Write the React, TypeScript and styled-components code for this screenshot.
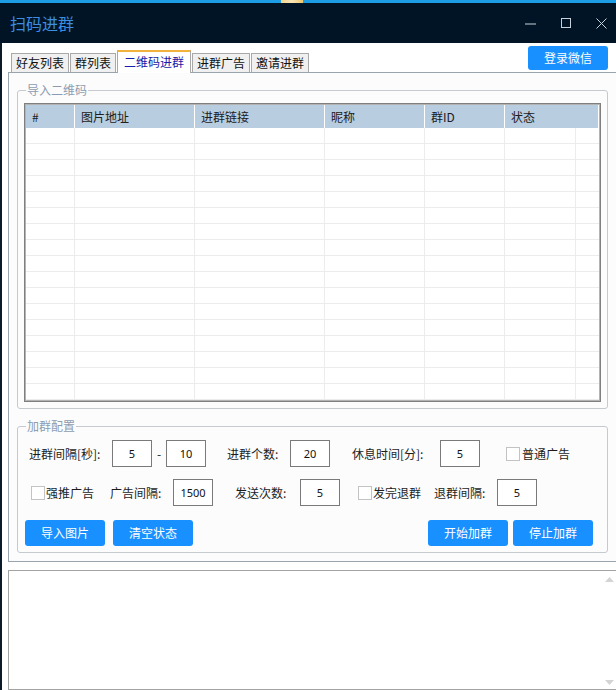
import styled, { createGlobalStyle } from "styled-components";

const GlobalStyle = createGlobalStyle`
  html, body {
    margin: 0;
    padding: 0;
    background: #ffffff;
  }
  body {
    font-family: "Noto Sans CJK SC", "Noto Sans", sans-serif;
    font-size: 12px;
    color: #1c1c1c;
  }
  * {
    box-sizing: border-box;
  }
`;

const Window = styled.div`
  width: 616px;
  height: 690px;
  overflow: hidden;
  display: flex;
  flex-direction: column;
  background: #ffffff;
`;

const TopStrip = styled.div`
  height: 3px;
  flex-shrink: 0;
  background: #1c9de6;
  display: flex;
  & > span {
    margin-left: 281px;
    width: 22px;
    background: linear-gradient(90deg, #f3d48a, #f8e6b8, #f0c76a);
  }
`;

const TitleBar = styled.div`
  height: 40px;
  flex-shrink: 0;
  background: #011426;
  display: flex;
  align-items: center;
  padding-left: 10px;
`;

const Title = styled.div`
  font-size: 16px;
  line-height: 20px;
  color: #3a8fe2;
`;

const Controls = styled.div`
  margin-left: auto;
  display: flex;
  align-items: center;
  gap: 25px;
  padding-right: 9px;
  color: #c9d2db;
  & svg {
    display: block;
  }
`;

const Body = styled.div`
  flex: 1;
  display: flex;
  flex-direction: column;
  border-left: 2px solid #0a1a29;
  padding-left: 6px;
  overflow: hidden;
`;

const TabRow = styled.div`
  height: 29px;
  flex-shrink: 0;
  display: flex;
  align-items: flex-end;
  padding-left: 3px;
`;

const Tab = styled.div<{ $active?: boolean }>`
  position: relative;
  z-index: ${(p) => (p.$active ? 1 : 0)};
  height: ${(p) => (p.$active ? "23px" : "19px")};
  margin-bottom: ${(p) => (p.$active ? "-1px" : "0")};
  margin-right: 1px;
  padding: 0 ${(p) => (p.$active ? "6px" : "4px")};
  border: 1px solid #a9a9a9;
  border-top: ${(p) => (p.$active ? "2px solid #f2b23e" : "1px solid #a9a9a9")};
  border-bottom: none;
  background: ${(p) => (p.$active ? "#ffffff" : "#f0f0f0")};
  color: ${(p) => (p.$active ? "#1620a8" : "#111111")};
  font-size: 12px;
  line-height: ${(p) => (p.$active ? "20px" : "18px")};
  white-space: nowrap;
`;

const BlueButton = styled.button<{ $ml?: number }>`
  width: 80px;
  height: 26px;
  margin-left: ${(p) => p.$ml ?? 0}px;
  border: none;
  border-radius: 3px;
  background: #1890ff;
  color: #ffffff;
  font-family: "Noto Sans CJK SC", "Noto Sans", sans-serif;
  font-size: 12px;
  line-height: 26px;
  padding: 0;
  cursor: pointer;
`;

const LoginButton = styled(BlueButton)`
  height: 24px;
  line-height: 24px;
  margin-left: auto;
  margin-right: 8px;
  align-self: flex-start;
  margin-top: 3px;
`;

const Panel = styled.div`
  width: 610px;
  flex-shrink: 0;
  border: 1px solid #9aa4ad;
  background: #fcfcfd;
  padding: 10px 9px 8px 8px;
  display: flex;
  flex-direction: column;
`;

const Group = styled.fieldset<{ $mt?: number }>`
  margin: ${(p) => p.$mt ?? 0}px 0 0 0;
  padding: 6px 6px 6px 6px;
  border: 1px solid #c6cace;
  border-radius: 3px;
  min-width: 0;
`;

const Legend = styled.legend`
  margin-left: 2px;
  padding: 0 1px;
  font-size: 12px;
  line-height: 14px;
  color: #8d9cb0;
`;

const Table = styled.div`
  border: 1px solid #7f7f7f;
  padding: 1px;
  background: #b3b3b3;
`;

const Grid = styled.div`
  display: grid;
  grid-template-columns: 49px 120px 130px 100px 80px 71px 1fr;
  background: #ffffff;
`;

const HeadCell = styled.div<{ $span?: number }>`
  grid-column: span ${(p) => p.$span ?? 1};
  height: 23px;
  line-height: 23px;
  padding-left: 6px;
  background: #b9cde1;
  border-right: 1px solid #ffffff;
  color: #202020;
  &:last-of-type {
    border-right: none;
  }
`;

const Cell = styled.div<{ $last?: boolean }>`
  height: 16px;
  border-bottom: 1px solid #ececec;
  border-right: ${(p) => (p.$last ? "none" : "1px solid #ececec")};
`;

const Row = styled.div<{ $mt?: number; $pl?: number }>`
  display: flex;
  align-items: center;
  height: 27px;
  margin-top: ${(p) => p.$mt ?? 0}px;
  padding-left: ${(p) => p.$pl ?? 0}px;
`;

const Label = styled.span<{ $w?: number; $ml?: number; $center?: boolean }>`
  display: inline-block;
  width: ${(p) => (p.$w ? `${p.$w}px` : "auto")};
  margin-left: ${(p) => p.$ml ?? 0}px;
  text-align: ${(p) => (p.$center ? "center" : "left")};
  line-height: 27px;
  font-size: 12px;
  color: #1c1c1c;
  white-space: nowrap;
`;

const NumInput = styled.input`
  width: 40px;
  height: 27px;
  flex-shrink: 0;
  border: 1px solid #7a7a7a;
  background: #ffffff;
  text-align: center;
  font-family: "Noto Sans", "Noto Sans CJK SC", sans-serif;
  font-size: 11px;
  color: #111111;
  padding: 0;
  outline: none;
`;

const Check = styled.span<{ $ml?: number }>`
  display: inline-block;
  width: 14px;
  height: 14px;
  flex-shrink: 0;
  margin-left: ${(p) => p.$ml ?? 0}px;
  border: 1px solid #c3c3c3;
  background: #ffffff;
`;

const ButtonRow = styled.div`
  display: flex;
  justify-content: space-between;
  margin-top: 14px;
  padding: 0 8px 0 1px;
`;

const ButtonGroup = styled.div`
  display: flex;
`;

const LogBox = styled.div`
  width: 610px;
  flex: 1;
  margin-top: 8px;
  border: 1px solid #a3a3a3;
  background: #ffffff;
  display: flex;
  justify-content: flex-end;
`;

const ScrollCol = styled.div`
  width: 16px;
  display: flex;
  flex-direction: column;
  justify-content: space-between;
  align-items: center;
  padding: 6px 0 4px;
  & svg {
    display: block;
  }
`;

const columns = ["#", "图片地址", "进群链接", "昵称", "群ID", "状态"];
const rowCount = 17;

export default function App() {
  return (
    <>
      <GlobalStyle />
      <Window>
        <TopStrip>
          <span />
        </TopStrip>
        <TitleBar>
          <Title>扫码进群</Title>
          <Controls>
            <svg width="11" height="11" viewBox="0 0 11 11">
              <line x1="0" y1="6" x2="11" y2="6" stroke="currentColor" strokeWidth="1" />
            </svg>
            <svg width="10" height="10" viewBox="0 0 10 10">
              <rect x="0.5" y="0.5" width="9" height="9" fill="none" stroke="currentColor" strokeWidth="1" />
            </svg>
            <svg width="11" height="11" viewBox="0 0 11 11">
              <path d="M0.5 0.5 L10.5 10.5 M10.5 0.5 L0.5 10.5" stroke="currentColor" strokeWidth="1" />
            </svg>
          </Controls>
        </TitleBar>
        <Body>
          <TabRow>
            <Tab>好友列表</Tab>
            <Tab>群列表</Tab>
            <Tab $active>二维码进群</Tab>
            <Tab>进群广告</Tab>
            <Tab>邀请进群</Tab>
            <LoginButton>登录微信</LoginButton>
          </TabRow>
          <Panel>
            <Group>
              <Legend>导入二维码</Legend>
              <Table>
                <Grid>
                  {columns.map((c, i) => (
                    <HeadCell key={c} $span={i === columns.length - 1 ? 2 : 1}>
                      {c}
                    </HeadCell>
                  ))}
                  {Array.from({ length: rowCount }).map((_, r) =>
                    Array.from({ length: 7 }).map((__, c) => (
                      <Cell key={`${r}-${c}`} $last={c === 6} />
                    ))
                  )}
                </Grid>
              </Table>
            </Group>
            <Group $mt={10}>
              <Legend>加群配置</Legend>
              <Row $mt={1} $pl={5}>
                <Label $w={83}>进群间隔[秒]:</Label>
                <NumInput defaultValue="5" />
                <Label $w={14} $center>
                  -
                </Label>
                <NumInput defaultValue="10" />
                <Label $w={63} $ml={21}>
                  进群个数:
                </Label>
                <NumInput defaultValue="20" />
                <Label $w={88} $ml={22}>
                  休息时间[分]:
                </Label>
                <NumInput defaultValue="5" />
                <Check $ml={26} />
                <Label $ml={2}>普通广告</Label>
              </Row>
              <Row $mt={12} $pl={7}>
                <Check />
                <Label $w={64} $ml={1}>
                  强推广告
                </Label>
                <Label $w={63}>广告间隔:</Label>
                <NumInput defaultValue="1500" />
                <Label $w={65} $ml={22}>
                  发送次数:
                </Label>
                <NumInput defaultValue="5" />
                <Check $ml={18} />
                <Label $w={61} $ml={1}>
                  发完退群
                </Label>
                <Label $w={63}>退群间隔:</Label>
                <NumInput defaultValue="5" />
              </Row>
              <ButtonRow>
                <ButtonGroup>
                  <BlueButton>导入图片</BlueButton>
                  <BlueButton $ml={8}>清空状态</BlueButton>
                </ButtonGroup>
                <ButtonGroup>
                  <BlueButton>开始加群</BlueButton>
                  <BlueButton $ml={5}>停止加群</BlueButton>
                </ButtonGroup>
              </ButtonRow>
            </Group>
          </Panel>
          <LogBox>
            <ScrollCol>
              <svg width="9" height="5" viewBox="0 0 9 5">
                <path d="M4.5 0 L9 5 L0 5 Z" fill="#d4d4d4" />
              </svg>
              <svg width="9" height="5" viewBox="0 0 9 5">
                <path d="M0 0 L9 0 L4.5 5 Z" fill="#d4d4d4" />
              </svg>
            </ScrollCol>
          </LogBox>
        </Body>
      </Window>
    </>
  );
}
